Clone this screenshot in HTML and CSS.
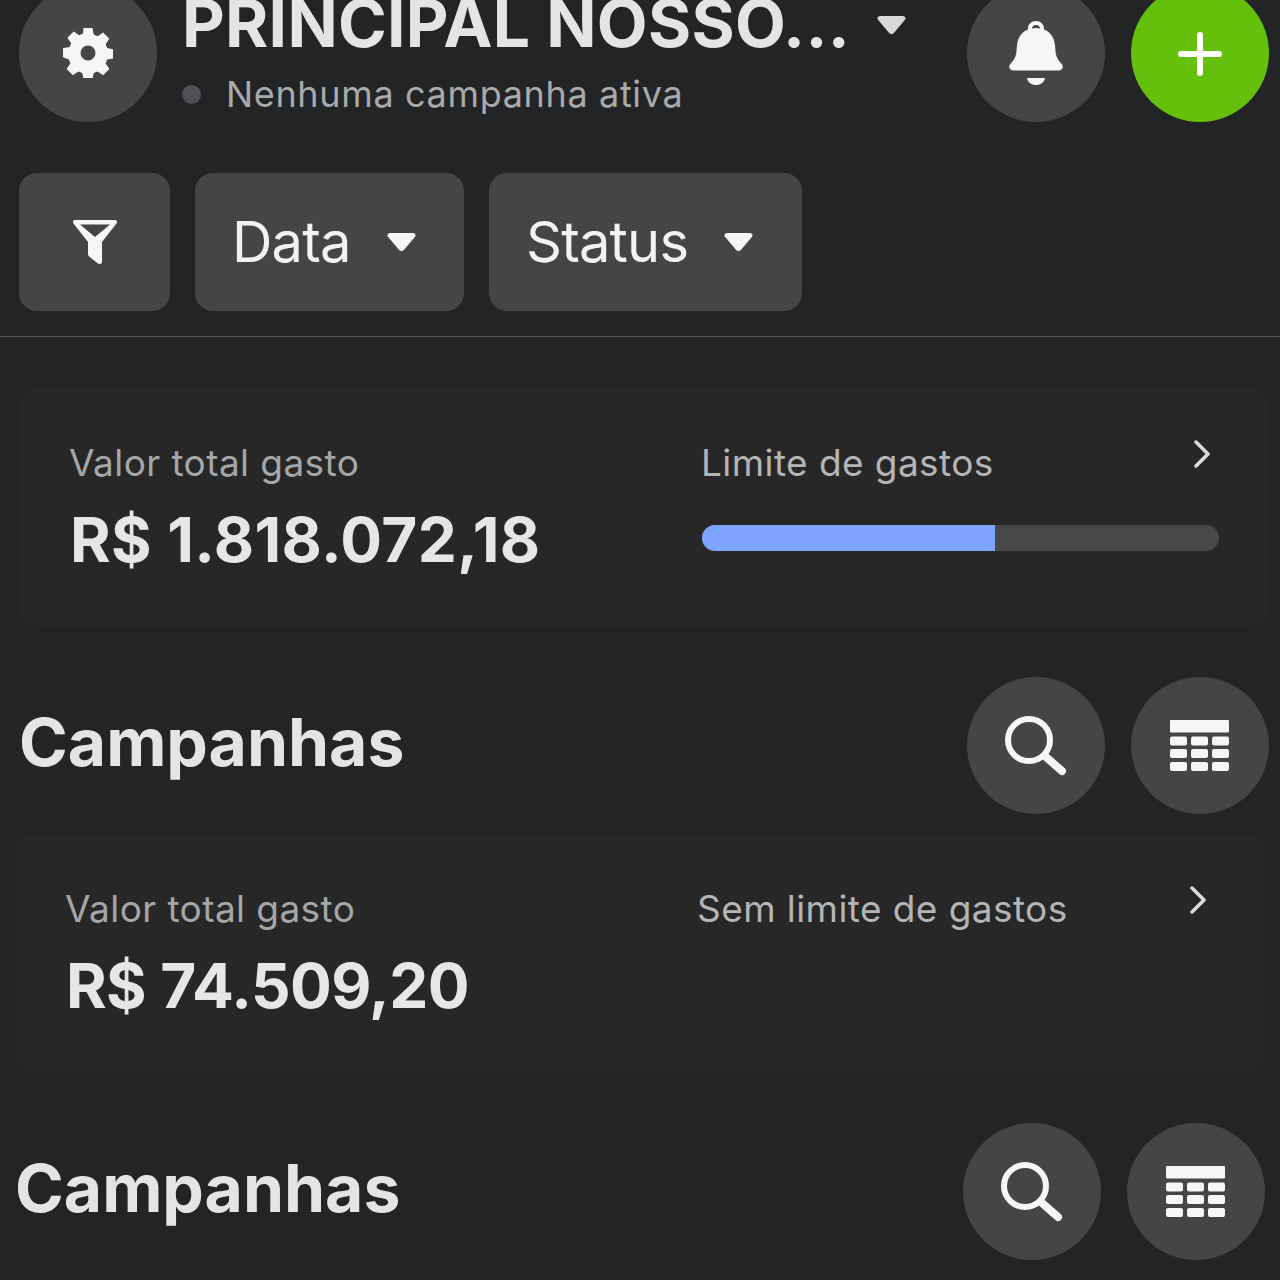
FILE: index.html
```html
<!DOCTYPE html>
<html lang="pt-BR">
<head>
<meta charset="utf-8">
<title>Campanhas</title>
<link rel="stylesheet" href="styles.css">
</head>
<body>
<div class="page">
  <header class="topbar">
    <button class="circle" aria-label="Configurações">
      <svg class="ic-gear" viewBox="0 0 50 50"><path fill-rule="evenodd" fill="#f6f6f6" d="M20.5 0h9l1.2 6.6 3.9 1.6 5.500-3.800 6.300 6.300-3.800 5.500 1.600 3.900 6.600 1.200v9l-6.600 1.200-1.600 3.900 3.800 5.500-6.300 6.300-5.500-3.800-3.900 1.600-1.200 6.600h-9l-1.200-6.600-3.900-1.600-5.500 3.800-6.300-6.300 3.800-5.500-1.600-3.900L0 29.300v-9l6.600-1.200 1.600-3.900-3.800-5.500 6.300-6.300 5.500 3.800 3.900-1.600zM25 17.500a7.500 7.500 0 1 0 0 15 7.500 7.500 0 0 0 0-15z"/></svg>
    </button>
    <div class="account">
      <div class="account-name">
        <h1>PRINCIPAL NOSSO...</h1>
        <svg class="caret caret-title" viewBox="0 0 30 20"><path fill="#d8d8d8" d="M3 0h24c2.500 0 3.500 2.500 2 4.300L17.500 18c-1.400 1.500-3.600 1.500-5 0L1 4.300C-.5 2.500.5 0 3 0z"/></svg>
      </div>
      <div class="status"><span class="dot"></span><span>Nenhuma campanha ativa</span></div>
    </div>
    <button class="circle" aria-label="Notificações">
      <svg class="ic-bell" viewBox="0 0 56 64"><path fill="#f6f6f6" fill-rule="evenodd" d="M28 0c4.500 0 8 3.300 8 7.500v.9c7.800 3 11 10 11.300 19 .2 6.500 1.700 10.500 6 15 2.700 3 1.500 7.100-2.800 7.100H5.500c-4.300 0-5.500-4.100-2.800-7.100 4.300-4.500 5.800-8.500 6-15 .3-9 3.500-16 11.300-19v-.9C20 3.300 23.500 0 28 0zm0 4c-2.200 0-4 1.500-4 3.500q4-1 8 0C32 5.500 30.200 4 28 4zM19 57h18c-.8 4.500-4.500 7-9 7s-8.200-2.500-9-7z"/></svg>
    </button>
    <button class="circle circle-green" aria-label="Adicionar">
      <svg class="ic-plus" viewBox="0 0 44 44"><path stroke="#fff" stroke-width="6" stroke-linecap="round" d="M22 3v38M3 22h38"/></svg>
    </button>
  </header>

  <nav class="filters">
    <button class="chip chip-icon" aria-label="Filtro">
      <svg class="ic-filter" viewBox="0 0 44 44"><path fill="#f6f6f6" fill-rule="evenodd" d="M2 0h40c1.800 0 2.600 2 1.500 3.400L29 22v19.500c0 2.500-2.600 3.300-4.300 1.700l-8-6.200c-1.100-.9-1.700-2-1.700-3.200V22L.5 3.400C-.6 2 .2 0 2 0zm5 4.500L22 17 37 4.500z"/></svg>
    </button>
    <button class="chip chip-data">Data<svg class="caret" viewBox="0 0 30 20"><path fill="#f6f6f6" d="M3 0h24c2.500 0 3.500 2.500 2 4.300L17.500 18c-1.400 1.500-3.600 1.500-5 0L1 4.300C-.5 2.500.5 0 3 0z"/></svg></button>
    <button class="chip chip-status">Status<svg class="caret" viewBox="0 0 30 20"><path fill="#f6f6f6" d="M3 0h24c2.500 0 3.500 2.500 2 4.300L17.500 18c-1.400 1.500-3.600 1.500-5 0L1 4.300C-.5 2.500.5 0 3 0z"/></svg></button>
  </nav>

  <hr class="divider">

  <section class="group">
    <article class="card">
      <div class="col-left">
        <p class="label">Valor total gasto</p>
        <p class="amount">R$ 1.818.072,18</p>
      </div>
      <div class="col-right">
        <p class="label label-light">Limite de gastos</p>
        <div class="track"><div class="fill"></div></div>
      </div>
      <svg class="chevron" viewBox="0 0 16 28"><path fill="none" stroke="#dcdcdc" stroke-width="3.500" stroke-linecap="round" stroke-linejoin="round" d="M2 2l12 12L2 26"/></svg>
    </article>
    <div class="section-head">
      <h2>Campanhas</h2>
      <div class="actions">
        <button class="circle circle-sm" aria-label="Buscar">
          <svg class="ic-search" viewBox="0 0 62 60"><circle cx="24" cy="24" r="21" fill="none" stroke="#f6f6f6" stroke-width="6"/><path stroke="#f6f6f6" stroke-width="8" stroke-linecap="round" d="M41 41l16 14"/></svg>
        </button>
        <button class="circle circle-sm" aria-label="Tabela">
          <svg class="ic-table" viewBox="0 0 59 52"><g fill="#f6f6f6"><rect width="59" height="12.500" rx="1"/><rect y="16.500" width="17" height="9" rx="2"/><rect x="21" y="16.500" width="17" height="9" rx="2"/><rect x="42" y="16.500" width="17" height="9" rx="2"/><rect y="29" width="17" height="9" rx="2"/><rect x="21" y="29" width="17" height="9" rx="2"/><rect x="42" y="29" width="17" height="9" rx="2"/><rect y="42" width="17" height="9" rx="2"/><rect x="21" y="42" width="17" height="9" rx="2"/><rect x="42" y="42" width="17" height="9" rx="2"/></g></svg>
        </button>
      </div>
    </div>
  </section>

  <section class="group group-shift">
    <article class="card">
      <div class="col-left">
        <p class="label">Valor total gasto</p>
        <p class="amount amount-tight">R$ 74.509,20</p>
      </div>
      <div class="col-right">
        <p class="label label-light">Sem limite de gastos</p>
      </div>
      <svg class="chevron" viewBox="0 0 16 28"><path fill="none" stroke="#dcdcdc" stroke-width="3.500" stroke-linecap="round" stroke-linejoin="round" d="M2 2l12 12L2 26"/></svg>
    </article>
    <div class="section-head">
      <h2>Campanhas</h2>
      <div class="actions">
        <button class="circle circle-sm" aria-label="Buscar">
          <svg class="ic-search" viewBox="0 0 62 60"><circle cx="24" cy="24" r="21" fill="none" stroke="#f6f6f6" stroke-width="6"/><path stroke="#f6f6f6" stroke-width="8" stroke-linecap="round" d="M41 41l16 14"/></svg>
        </button>
        <button class="circle circle-sm" aria-label="Tabela">
          <svg class="ic-table" viewBox="0 0 59 52"><g fill="#f6f6f6"><rect width="59" height="12.500" rx="1"/><rect y="16.500" width="17" height="9" rx="2"/><rect x="21" y="16.500" width="17" height="9" rx="2"/><rect x="42" y="16.500" width="17" height="9" rx="2"/><rect y="29" width="17" height="9" rx="2"/><rect x="21" y="29" width="17" height="9" rx="2"/><rect x="42" y="29" width="17" height="9" rx="2"/><rect y="42" width="17" height="9" rx="2"/><rect x="21" y="42" width="17" height="9" rx="2"/><rect x="42" y="42" width="17" height="9" rx="2"/></g></svg>
        </button>
      </div>
    </div>
  </section>
</div>
</body>
</html>
```
FILE: styles.css
```css
* { box-sizing: border-box; }
html, body { margin: 0; height: 1280px; overflow: hidden; background: #232426; }
body { font-family: Inter, "Liberation Sans", sans-serif; color: #e2e2e2; }
p, h1, h2 { margin: 0; }
button { border: 0; padding: 0; font: inherit; color: inherit; }
svg { display: block; flex: none; }

.page { width: 1280px; margin-top: -16px; }

.topbar { display: flex; align-items: flex-start; padding: 0 11px 0 19px; height: 189px; }
.circle { width: 138px; height: 138px; border-radius: 50%; background: #444547; display: flex; align-items: center; justify-content: center; flex: none; }
.circle + .circle { margin-left: 26px; }
.circle-green { background: #64c00a; }
.circle-sm { height: 137px; }
.account { flex: 1; padding-left: 25px; min-width: 0; }
.account-name { display: flex; align-items: center; height: 82px; margin-top: -2px; }
.account-name h1 { font-size: 66px; line-height: 82px; font-weight: 700; letter-spacing: .25px; color: #e4e4e4; white-space: nowrap; }
.caret { width: 29px; height: 19px; margin-left: 36px; }
.caret-title { margin-left: 27px; margin-top: 4px; }
.status { display: flex; align-items: center; font-size: 36px; line-height: 46px; color: #a9aaab; letter-spacing: .65px; margin-top: 7px; }
.dot { width: 19px; height: 19px; border-radius: 50%; background: #505154; margin: 0 25px 0 0; }

.ic-gear { width: 50px; height: 50px; }
.ic-bell { width: 56px; height: 64px; }
.ic-plus { width: 44px; height: 44px; margin-top: 2px; }
.ic-search { width: 62px; height: 60px; }
.ic-table { width: 59px; height: 52px; margin-left: -2px; }
.ic-filter { width: 44px; height: 44px; }

.filters { display: flex; gap: 25px; padding-left: 19px; height: 137px; }
.chip { height: 138px; border-radius: 18px; background: #444547; display: flex; align-items: center; font-size: 56px; color: #f2f2f2; letter-spacing: -.8px; }
.chip-icon { width: 151px; justify-content: center; }
.chip-data { width: 269px; padding-left: 37px; }
.chip-status { width: 313px; padding-left: 37px; }

.divider { border: 0; height: 1px; background: #55565a; margin: 26px 0 51px; }

.group { padding: 0 11px 0 19px; }
.group-shift { transform: translateX(-4px); margin-top: 20px; }
.card { position: relative; display: flex; height: 238px; border-radius: 18px; background: #272728; padding: 52px 0 0 51px; }
.col-left { width: 632px; }
.col-right { flex: 1; }
.label { font-size: 37px; line-height: 46px; color: #a5a6a7; letter-spacing: .42px; white-space: nowrap; margin-left: -1px; }
.label-light { color: #b4b5b6; }
.amount { font-size: 62px; line-height: 74px; font-weight: 700; color: #e6e6e6; letter-spacing: .4px; margin-top: 17px; white-space: nowrap; }
.amount-tight { letter-spacing: -.6px; }
.track { width: 517px; height: 26px; border-radius: 13px; background: #484848; margin-top: 39px; overflow: hidden; }
.fill { width: 293px; height: 100%; background: #7da5ff; }
.chevron { position: absolute; top: 52px; right: 59px; width: 16px; height: 28px; }

.section-head { display: flex; align-items: center; justify-content: space-between; height: 137px; margin-top: 51px; }
.section-head h2 { font-size: 66px; font-weight: 700; color: #e4e4e4; padding-bottom: 8px; }
.actions { display: flex; }
```
